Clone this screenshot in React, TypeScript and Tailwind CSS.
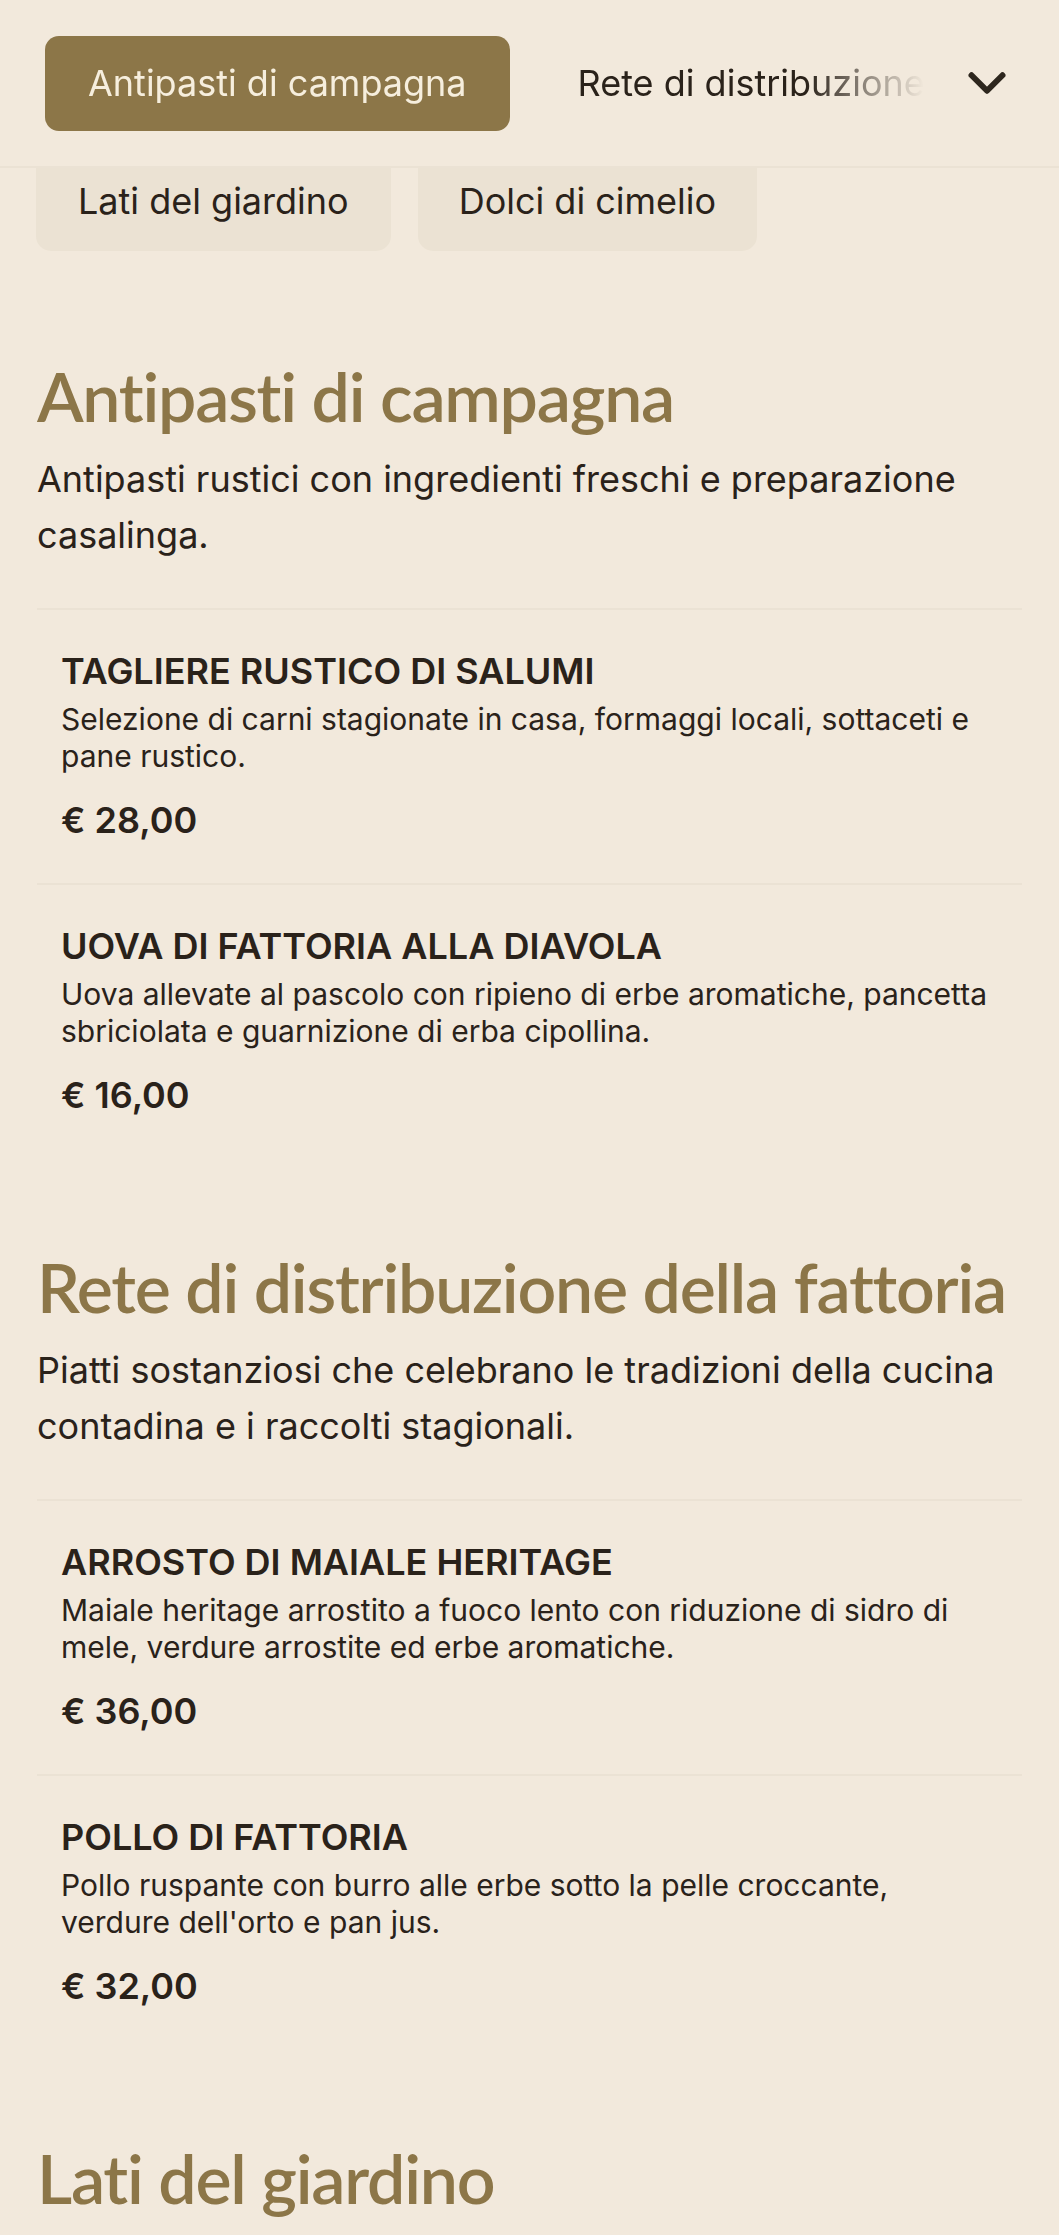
import { ChevronDown } from "lucide-react";

type Item = { name: string; desc: string; price: string };
type Section = { title: string; desc: string; items: Item[] };

const tabs = ["Antipasti di campagna", "Rete di distribuzione della fattoria", "Lati del giardino", "Dolci di cimelio"];

const sections: Section[] = [
  {
    title: "Antipasti di campagna",
    desc: "Antipasti rustici con ingredienti freschi e preparazione casalinga.",
    items: [
      {
        name: "Tagliere rustico di salumi",
        desc: "Selezione di carni stagionate in casa, formaggi locali, sottaceti e pane rustico.",
        price: "€ 28,00",
      },
      {
        name: "Uova di fattoria alla diavola",
        desc: "Uova allevate al pascolo con ripieno di erbe aromatiche, pancetta sbriciolata e guarnizione di erba cipollina.",
        price: "€ 16,00",
      },
    ],
  },
  {
    title: "Rete di distribuzione della fattoria",
    desc: "Piatti sostanziosi che celebrano le tradizioni della cucina contadina e i raccolti stagionali.",
    items: [
      {
        name: "Arrosto di maiale heritage",
        desc: "Maiale heritage arrostito a fuoco lento con riduzione di sidro di mele, verdure arrostite ed erbe aromatiche.",
        price: "€ 36,00",
      },
      {
        name: "Pollo di fattoria",
        desc: "Pollo ruspante con burro alle erbe sotto la pelle croccante, verdure dell'orto e pan jus.",
        price: "€ 32,00",
      },
    ],
  },
  {
    title: "Lati del giardino",
    desc: "Contorni di stagione raccolti nell'orto della fattoria.",
    items: [
      {
        name: "Verdure arrostite",
        desc: "Carote, pastinache e barbabietole arrostite con miele e timo.",
        price: "€ 12,00",
      },
    ],
  },
];

function MenuItem({ item }: { item: Item }) {
  return (
    <div className="border-t-2 border-[#ebe2d4] px-6 pt-[39px] pb-[38px]">
      <h3 className="text-[36px] leading-[44px] font-semibold uppercase">{item.name}</h3>
      <p className="mt-[8px] text-[30px] leading-[37px]">{item.desc}</p>
      <p className="mt-[20px] text-[36px] leading-[50px] font-semibold">{item.price}</p>
    </div>
  );
}

export default function App() {
  return (
    <div
      className="h-[2235px] overflow-hidden bg-[#f2e9dc] text-[#2a221a]"
      style={{ fontFamily: "Inter, 'Noto Sans', sans-serif" }}
    >
      <header className="flex h-[168px] items-center border-b-2 border-[#ebe2d4] pl-[45px] pr-[36px]">
        <nav className="flex min-w-0 flex-1 gap-[25px] overflow-hidden [mask-image:linear-gradient(to_right,#000_84%,transparent_97%)]">
          {tabs.map((t, i) => (
            <button
              key={t}
              className={
                i === 0
                  ? "flex h-[95px] shrink-0 items-center rounded-[14px] bg-[#8c7648] px-[43px] text-[36px] text-[#f6eedd]"
                  : "flex h-[95px] shrink-0 items-center rounded-[14px] px-[43px] text-[36px]"
              }
            >
              {t}
            </button>
          ))}
        </nav>
        <button className="flex h-[72px] w-[72px] items-center justify-center text-[#2e271e]">
          <ChevronDown size={62} strokeWidth={2.3} />
        </button>
      </header>

      <div className="flex gap-[27px] px-[36px]">
        <div className="rounded-b-[15px] bg-[#ebe2d3] px-[42px] pt-[6px] pb-[23px] text-[36px] leading-[54px]">
          Lati del giardino
        </div>
        <div className="rounded-b-[15px] bg-[#ebe2d3] px-[41px] pt-[6px] pb-[23px] text-[36px] leading-[54px]">
          Dolci di cimelio
        </div>
      </div>

      <main className="px-[37px] pt-[16px]">
        {sections.map((s) => (
          <section key={s.title} className="pt-[89px]">
            <h2
              className="text-[68px] leading-[80px] font-semibold tracking-[-0.018em] text-[#8c7648] [font-variant-ligatures:none]"
              style={{ fontFamily: "Lato, 'Open Sans', sans-serif" }}
            >
              {s.title}
            </h2>
            <p className="mt-[15px] text-[36px] leading-[56px]">{s.desc}</p>
            <div className="mt-[45px]">
              {s.items.map((it) => (
                <MenuItem key={it.name} item={it} />
              ))}
            </div>
          </section>
        ))}
      </main>
    </div>
  );
}
